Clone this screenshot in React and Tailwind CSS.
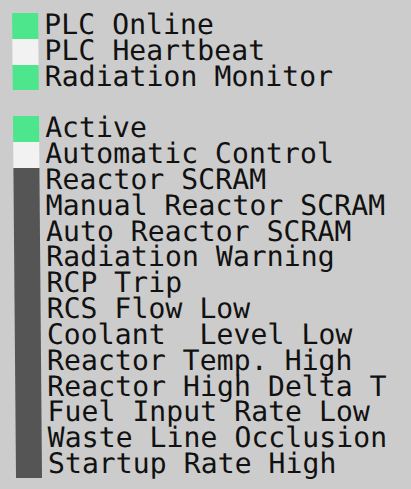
import React from 'react';

const rows = [
  { label: 'PLC Online', color: 'bg-[#4de68c]' },
  { label: 'PLC Heartbeat', color: 'bg-[#f2f2f2]' },
  { label: 'Radiation Monitor', color: 'bg-[#4de68c]' },
  { label: '', color: '' },
  { label: 'Active', color: 'bg-[#4de68c]' },
  { label: 'Automatic Control', color: 'bg-[#f2f2f2]' },
  { label: 'Reactor SCRAM', color: 'bg-[#555555]' },
  { label: 'Manual Reactor SCRAM', color: 'bg-[#555555]' },
  { label: 'Auto Reactor SCRAM', color: 'bg-[#555555]' },
  { label: 'Radiation Warning', color: 'bg-[#555555]' },
  { label: 'RCP Trip', color: 'bg-[#555555]' },
  { label: 'RCS Flow Low', color: 'bg-[#555555]' },
  { label: 'Coolant  Level Low', color: 'bg-[#555555]' },
  { label: 'Reactor Temp. High', color: 'bg-[#555555]' },
  { label: 'Reactor High Delta T', color: 'bg-[#555555]' },
  { label: 'Fuel Input Rate Low', color: 'bg-[#555555]' },
  { label: 'Waste Line Occlusion', color: 'bg-[#555555]' },
  { label: 'Startup Rate High', color: 'bg-[#555555]' },
];

const App = () => {
  return (
    <div className="w-[411px] h-[489px] bg-[#cccccc] overflow-hidden">
      <div className="flex flex-col pt-[13px] pl-[12px] origin-top-left skew-x-[0.48deg]">
        {rows.map((row, idx) => (
          <div key={idx} className="flex h-[25.83px] items-start">
            <div className={`w-[26px] h-full shrink-0 ${row.color}`}></div>
            <span className="ml-[6px] whitespace-pre text-[28.2px] leading-[23px] text-[#111111] font-['DejaVu_Sans_Mono',monospace]">
              {row.label}
            </span>
          </div>
        ))}
      </div>
    </div>
  );
};

export default App;
